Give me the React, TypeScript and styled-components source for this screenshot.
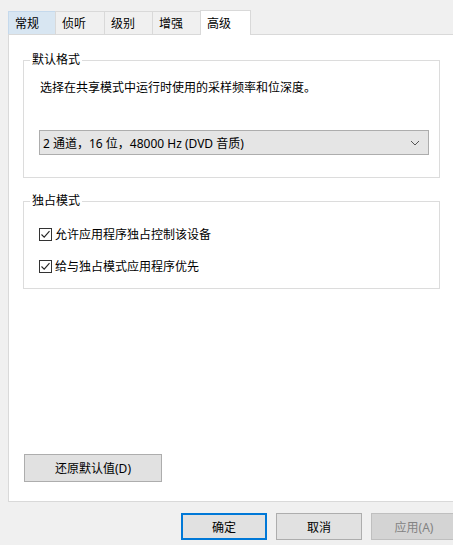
import styled, { createGlobalStyle } from "styled-components";

const GlobalStyle = createGlobalStyle`
  html, body {
    margin: 0;
    padding: 0;
    background: #f0f0f0;
    overflow: hidden;
  }
  body {
    font-family: "Noto Sans", "Noto Sans CJK SC", sans-serif;
    font-size: 12px;
    color: #000;
  }
`;

const tabs = [
  { label: "常规", width: 48 },
  { label: "侦听", width: 50 },
  { label: "级别", width: 49 },
  { label: "增强", width: 49 },
  { label: "高级", width: 51 },
];

const Check = () => (
  <CheckBox>
    <svg width="11" height="11" viewBox="0 0 11 11">
      <path d="M1.5 5.5 L4.2 8.2 L9.5 2.2" fill="none" stroke="#222" strokeWidth="1.1" />
    </svg>
  </CheckBox>
);

const App = () => {
  return (
    <Window>
      <GlobalStyle />
      <TabStrip>
        {tabs.map((t, i) => (
          <Tab key={t.label} $w={t.width} $hover={i === 0} $active={i === 4}>
            {t.label}
          </Tab>
        ))}
      </TabStrip>
      <Panel>
        <Group $top={17}>
          <Legend>默认格式</Legend>
          <Description>选择在共享模式中运行时使用的采样频率和位深度。</Description>
          <Combo>
            <span>2 通道，16 位，48000 Hz (DVD 音质)</span>
            <svg width="10" height="6" viewBox="0 0 10 6">
              <path d="M1 1 L5 5 L9 1" fill="none" stroke="#555" strokeWidth="1" />
            </svg>
          </Combo>
        </Group>
        <Group $top={15} $compact>
          <Legend>独占模式</Legend>
          <CheckRow>
            <Check />
            允许应用程序独占控制该设备
          </CheckRow>
          <CheckRow>
            <Check />
            给与独占模式应用程序优先
          </CheckRow>
        </Group>
        <ResetButton>还原默认值(D)</ResetButton>
      </Panel>
      <ButtonRow>
        <DialogButton $default>确定</DialogButton>
        <DialogButton>取消</DialogButton>
        <DialogButton $disabled>应用(A)</DialogButton>
      </ButtonRow>
    </Window>
  );
};

const Window = styled.div`
  width: 453px;
  height: 545px;
  overflow: hidden;
  padding-left: 8px;
  box-sizing: border-box;
`;

const TabStrip = styled.div`
  display: flex;
  align-items: flex-end;
  height: 24px;
  padding-top: 10px;
  position: relative;
  z-index: 1;
`;

const Tab = styled.div<{ $w: number; $hover?: boolean; $active?: boolean }>`
  box-sizing: border-box;
  width: ${(p) => p.$w}px;
  height: ${(p) => (p.$active ? 25 : 23)}px;
  margin-bottom: ${(p) => (p.$active ? -1 : 0)}px;
  padding-left: 6px;
  display: flex;
  align-items: center;
  border: 1px solid ${(p) => (p.$hover ? "#c5d9ec" : "#d9d9d9")};
  border-bottom: none;
  background: ${(p) => (p.$active ? "#fff" : p.$hover ? "#d8e6f2" : "#f0f0f0")};
  & + & {
    margin-left: -1px;
  }
`;

const Panel = styled.div`
  box-sizing: border-box;
  width: 460px;
  height: 468px;
  background: #fff;
  border: 1px solid #d9d9d9;
  padding: 0 0 19px 14px;
  display: flex;
  flex-direction: column;
`;

const Group = styled.fieldset<{ $top: number; $compact?: boolean }>`
  box-sizing: border-box;
  width: 417px;
  min-width: 0;
  margin: ${(p) => p.$top}px 0 0 0;
  padding: ${(p) => (p.$compact ? "17px 10px 14px 15px" : "12px 10px 22px 15px")};
  border: 1px solid #dcdcdc;
`;

const Legend = styled.legend`
  padding: 0 2px;
  margin-left: -9px;
  line-height: 16px;
`;

const Description = styled.div`
  line-height: 16px;
  padding-left: 1px;
`;

const Combo = styled.div`
  box-sizing: border-box;
  margin-top: 34px;
  height: 25px;
  border: 1px solid #adadad;
  background: #e5e5e5;
  display: flex;
  align-items: center;
  justify-content: space-between;
  padding: 0 8px 0 3px;
`;

const CheckRow = styled.div`
  display: flex;
  align-items: center;
  height: 16px;
  gap: 3px;
  & + & {
    margin-top: 16px;
  }
`;

const CheckBox = styled.span`
  box-sizing: border-box;
  width: 13px;
  height: 13px;
  border: 1px solid #333;
  background: #fff;
  display: flex;
  align-items: center;
  justify-content: center;
`;

const ResetButton = styled.div`
  box-sizing: border-box;
  margin: auto 0 0 1px;
  width: 138px;
  height: 28px;
  border: 1px solid #adadad;
  background: #e1e1e1;
  display: flex;
  align-items: center;
  justify-content: center;
`;

const ButtonRow = styled.div`
  display: flex;
  gap: 9px;
  padding: 11px 0 0 173px;
`;

const DialogButton = styled.div<{ $default?: boolean; $disabled?: boolean }>`
  box-sizing: border-box;
  flex: none;
  width: 86px;
  height: 27px;
  display: flex;
  align-items: center;
  justify-content: center;
  border: ${(p) => (p.$default ? "2px solid #0078d7" : p.$disabled ? "1px solid #bfbfbf" : "1px solid #adadad")};
  background: ${(p) => (p.$disabled ? "#d4d4d4" : "#e1e1e1")};
  color: ${(p) => (p.$disabled ? "#838383" : "#000")};
`;

export default App;
